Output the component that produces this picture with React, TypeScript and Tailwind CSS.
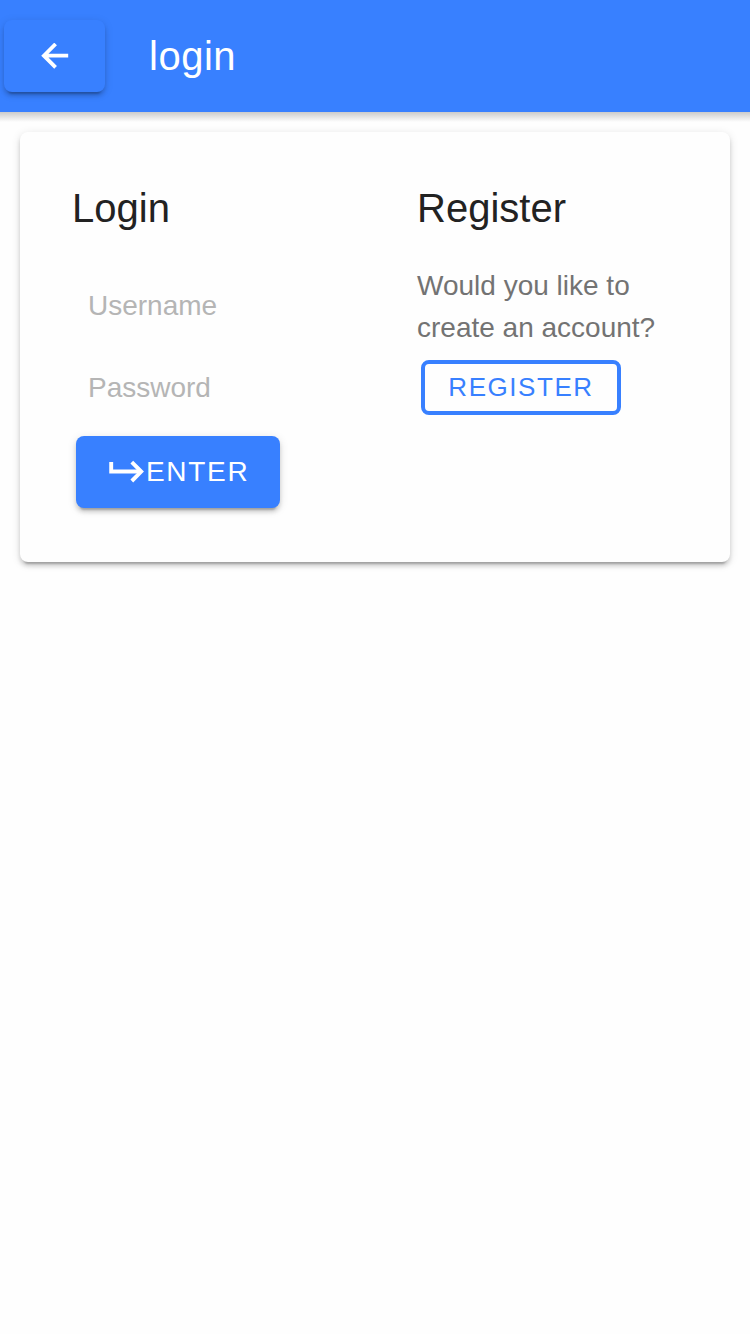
export default function App() {
  return (
    <div className="min-h-screen bg-[#fefefe] font-['Liberation_Sans',Arial,sans-serif]">
      <header className="relative flex h-28 items-center bg-[#3880ff] text-white after:absolute after:inset-x-0 after:top-full after:h-[10px] after:bg-linear-to-b after:from-black/20 after:to-transparent">
        <button aria-label="Back" className="ml-1 flex h-[72px] w-[101px] items-center justify-center rounded-lg bg-[#3880ff] shadow-[0_6px_2px_-4px_rgba(0,0,0,0.2),0_4px_4px_0_rgba(0,0,0,0.14),0_2px_10px_0_rgba(0,0,0,0.12)]">
          <svg className="h-[27px] w-[28px]" viewBox="0 0 28 27" fill="none" stroke="currentColor" strokeWidth="3.8"><path d="M27.2 12.7H3M14.6 1L2.9 12.7L14.6 24.4" /></svg>
        </button>
        <h1 className="ml-11 text-[40px] leading-[48px] tracking-[0.5px]">login</h1>
      </header>
      <main className="mx-5 mt-5 flex h-[430px] rounded-lg bg-[#fefefe] px-[42px] pt-[42px] shadow-[0_6px_2px_-4px_rgba(0,0,0,0.2),0_4px_4px_0_rgba(0,0,0,0.14),0_2px_10px_0_rgba(0,0,0,0.12)]">
        <section className="w-[345px] px-[10px]">
          <h2 className="pt-[10px] text-[40px] leading-[48px] text-[#222]">Login</h2>
          <input aria-label="Username" placeholder="Username" className="mt-[58px] block h-8 w-full px-4 text-[28px] text-[#222] outline-none placeholder:text-[#b5b5b5]" />
          <input aria-label="Password" type="password" placeholder="Password" className="mt-[50px] block h-8 w-full px-4 text-[28px] text-[#222] outline-none placeholder:text-[#b5b5b5]" />
          <button className="mt-8 ml-1 flex h-[72px] w-[204px] items-center rounded-lg bg-[#3880ff] pl-[33px] text-[28px] tracking-[1.68px] text-white shadow-[0_6px_2px_-4px_rgba(0,0,0,0.2),0_4px_4px_0_rgba(0,0,0,0.14),0_2px_10px_0_rgba(0,0,0,0.12)]">
            <svg className="h-6 w-9 shrink-0" viewBox="0 0 36 24" fill="none" stroke="currentColor"><path d="M2.2 2V11.5H32" strokeWidth="3.9" /><path d="M22.8 2.2L32.2 11.6L22.8 21" strokeWidth="3.9" /></svg>
            <span className="pl-px">ENTER</span>
          </button>
        </section>
        <section className="px-[10px]">
          <h2 className="pt-[10px] text-[40px] leading-[48px] text-[#222]">Register</h2>
          <p className="mt-[33px] text-[28px] leading-[42px] text-[#737373]">Would you like to<br />create an account?</p>
          <button className="mt-[11px] ml-1 h-[55px] w-[200px] rounded-lg border-4 border-[#3880ff] pb-px text-[26px] tracking-[1.56px] text-[#3880ff]">REGISTER</button>
        </section>
      </main>
    </div>
  );
}
